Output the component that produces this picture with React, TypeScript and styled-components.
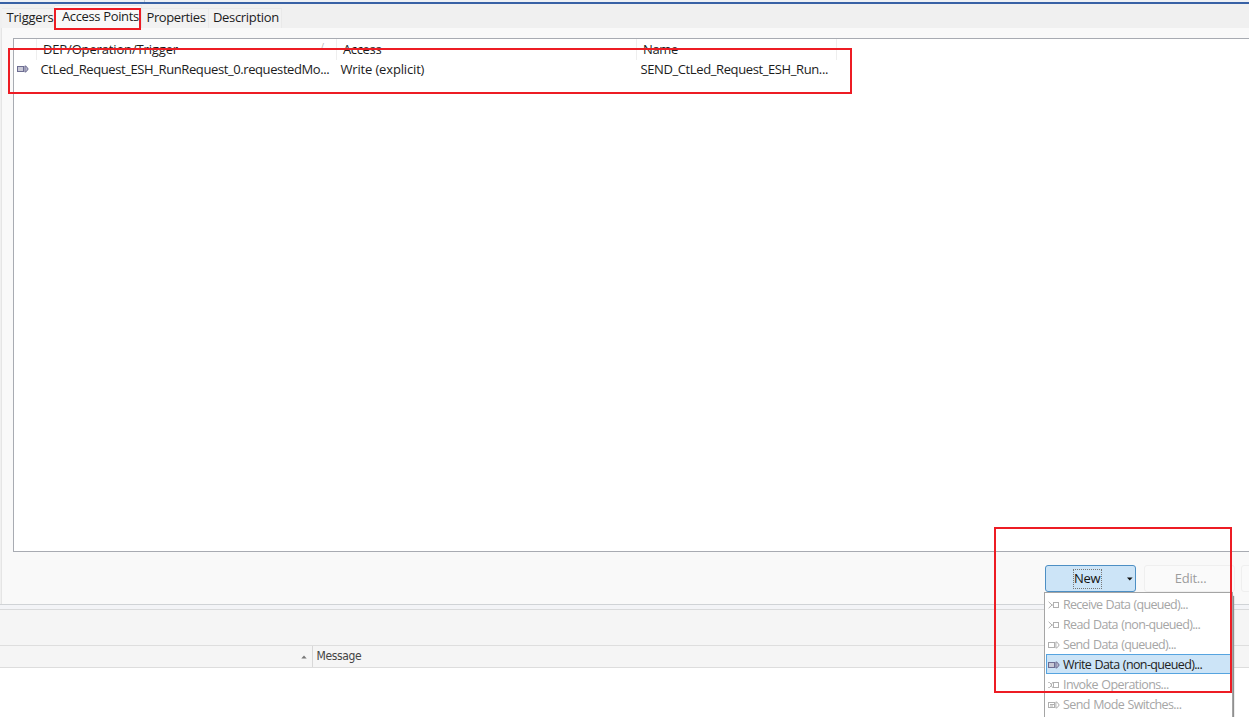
import React from "react";
import styled, { createGlobalStyle } from "styled-components";

const Global = createGlobalStyle`
  * { box-sizing: border-box; }
  html, body { margin: 0; padding: 0; overflow: hidden; background: #fff; }
`;

const Page = styled.div`
  position: relative;
  width: 1249px;
  height: 717px;
  overflow: hidden;
  display: flex;
  flex-direction: column;
  font: 13px/20px "Open Sans", "Noto Sans", sans-serif;
  color: #1c1c1c;
  background: #fff;
`;

const TopEdge = styled.div`
  flex: none;
  height: 4px;
  background: #eef1f6;
  border-bottom: 2px solid #3861a5;
  &::after {
    content: "";
    display: block;
    width: 1px;
    height: 2px;
    margin-left: 144px;
    background: #c5cad3;
  }
`;

const Label = styled.span<{ $track?: number }>`
  white-space: nowrap;
  letter-spacing: ${(p) => p.$track ?? 0}px;
`;

const TabBar = styled.div`
  flex: none;
  height: 24px;
  padding: 3px 0 0 2px;
  display: flex;
  align-items: flex-end;
  background: #f0f0f0;
`;

const Tab = styled.div<{ $w: number; $pad: number; $active?: boolean }>`
  flex: none;
  width: ${(p) => p.$w}px;
  height: ${(p) => (p.$active ? 23 : 20)}px;
  padding-left: ${(p) => p.$pad}px;
  line-height: ${(p) => (p.$active ? 20 : 17)}px;
  border: 1px solid #e9e9e9;
  border-width: 1px 1px 0 0;
  background: ${(p) => (p.$active ? "#f9f9f9" : "#f2f2f2")};
`;

const Panel = styled.section`
  flex: none;
  height: 576px;
  margin-left: 1px;
  padding: 10px 0 0 11px;
  border-left: 1px solid #e5e5e5;
  background: #f9f9f9;
  box-shadow: -1px 0 0 #f0f0f0;
`;

const List = styled.div`
  height: 514px;
  background: #fff;
  border: 1px solid #a8abb2;
  border-right: 0;
`;

const HeadRow = styled.div`
  display: grid;
  grid-template-columns: 23px 300px 300px 200px;
  height: 21px;
`;

const HeadCell = styled.div`
  display: flex;
  justify-content: space-between;
  padding-left: 6px;
  padding-right: 12px;
  border-right: 1px solid #eeeeee;
`;

const DataRow = styled.div`
  display: grid;
  grid-template-columns: 26.5px 300px 300px 200px;
  height: 20px;
  line-height: 19px;
`;

const IconCell = styled.div`
  display: flex;
  align-items: center;
  padding: 0 0 2px 3px;
`;

const SortMark = styled.span`
  color: #b5b5b5;
  font-size: 9px;
  line-height: 16px;
`;

const Actions = styled.div`
  display: flex;
  height: 52px;
  padding: 13px 0 0 1032px;
  gap: 8px;
`;

const SplitButton = styled.button`
  flex: none;
  display: flex;
  align-items: center;
  justify-content: space-between;
  width: 91px;
  height: 27px;
  padding: 0 2px 0 27px;
  font: inherit;
  color: #111;
  background: #cce4f7;
  border: 1px solid #4d8fc4;
  border-radius: 3px;
`;

const FocusText = styled.span`
  height: 20px;
  width: 29px;
  line-height: 17px;
  text-align: left;
  border: 1px dotted #777;
`;

const PlainButton = styled.button`
  flex: none;
  width: 91px;
  height: 27px;
  padding: 0 0 2px 2px;
  font: inherit;
  color: #9d9d9d;
  background: #fafafa;
  border: 1px solid #efefef;
  border-radius: 3px;
`;

const EdgeButton = styled(PlainButton)`
  margin-left: -2px;
`;

const Sash = styled.div`
  flex: none;
  height: 6px;
  border-top: 1px solid #d0d3d6;
  border-bottom: 1px solid #d9dadb;
  background: #f3f4f7;
`;

const Toolbar = styled.div`
  flex: none;
  height: 36px;
  background: #f5f5f5;
  border-bottom: 1px solid #dedede;
`;

const ProblemsHead = styled.div`
  flex: none;
  display: flex;
  height: 22px;
  background: #f5f5f5;
  border-bottom: 1px solid #dddddd;
  font-family: "DejaVu Sans Condensed", "DejaVu Sans", sans-serif;
  font-size: 12px;
  line-height: 20px;
  color: #444;
`;

const SortCell = styled.div`
  width: 313px;
  display: flex;
  align-items: center;
  justify-content: flex-end;
  padding-right: 5px;
  border-right: 1px solid #d8d8d8;
`;

const MessageCell = styled.div`
  padding-left: 3.5px;
`;

const Menu = styled.div`
  position: absolute;
  left: 1044px;
  top: 592px;
  width: 189px;
  height: 130px;
  padding: 1px 1px;
  background: #fff;
  border: 1px solid #a5a5a5;
  box-shadow: 1px 4px 1px #8f8f8f;
`;

const MenuItem = styled.div<{ $selected?: boolean }>`
  display: flex;
  align-items: center;
  gap: 3.5px;
  height: 20px;
  padding-top: ${(p) => (p.$selected ? 1 : 2)}px;
  padding-left: ${(p) => (p.$selected ? 0.5 : 1.5)}px;
  font-size: 12.5px;
  line-height: 18px;
  word-spacing: 0.8px;
  color: ${(p) => (p.$selected ? "#222" : "#a6a6a6")};
  background: ${(p) => (p.$selected ? "#cce4f7" : "transparent")};
  border: ${(p) => (p.$selected ? "1px solid #56a4e0" : "0")};
`;

const Marker = styled.div<{ $x: number; $y: number; $w: number; $h: number }>`
  position: absolute;
  left: ${(p) => p.$x}px;
  top: ${(p) => p.$y}px;
  width: ${(p) => p.$w}px;
  height: ${(p) => p.$h}px;
  border: 2px solid #ed1c24;
  pointer-events: none;
`;

const Glyph = styled.svg`
  flex: none;
`;

type IconKind = "receive" | "send" | "write" | "invoke" | "mode";

const PortIcon = ({ kind }: { kind: IconKind }) => {
  const write = kind === "write";
  const incoming = kind === "receive" || kind === "invoke";
  return (
    <Glyph width="12" height="10" viewBox="0 0 12 10" fill="none" stroke={write ? "#6d6d92" : "#b0b0b0"}>
      {incoming ? (
        <>
          <path d={kind === "receive" ? "M.6 1.8 4 5 .6 8.2M4 5H5.5" : "M.3 2.5H1.5L4 5 1.5 7.5H.3M5.5 2.5H4.5L3 5 4.5 7.5H5.5"} />
          <rect x="5.5" y="2.5" width="5" height="5" />
        </>
      ) : (
        <>
          <rect x=".5" y="2.5" width="6" height="5" fill={write ? "#c9c9d6" : "none"} />
          {kind === "mode" && <path d="M2 4.5H6M2 6H5" />}
          <path d="M7.9 1.9V8.1L9.2 7.7 11.2 5 9.2 2.3Z" fill={write ? "#b4b4ca" : "none"} />
        </>
      )}
    </Glyph>
  );
};

const menuItems: { text: string; kind: IconKind; track: number }[] = [
  { text: "Receive Data (queued)...", kind: "receive", track: -0.7 },
  { text: "Read Data (non-queued)...", kind: "receive", track: -0.66 },
  { text: "Send Data (queued)...", kind: "send", track: -0.65 },
  { text: "Write Data (non-queued)...", kind: "write", track: -0.63 },
  { text: "Invoke Operations...", kind: "invoke", track: -0.6 },
  { text: "Send Mode Switches...", kind: "mode", track: -0.62 },
];

export default function App() {
  return (
    <Page>
      <Global />
      <TopEdge />
      <TabBar>
        <Tab $w={53} $pad={4.5}><Label $track={-0.2}>Triggers</Label></Tab>
        <Tab $w={87} $pad={7} $active><Label $track={-0.36}>Access Points</Label></Tab>
        <Tab $w={67} $pad={4.5}><Label $track={-0.4}>Properties</Label></Tab>
        <Tab $w={73} $pad={4}><Label $track={-0.32}>Description</Label></Tab>
      </TabBar>
      <Panel>
        <List>
          <HeadRow>
            <HeadCell />
            <HeadCell><Label $track={-0.15}>DEP/Operation/Trigger</Label><SortMark>/</SortMark></HeadCell>
            <HeadCell><Label $track={-0.35}>Access</Label></HeadCell>
            <HeadCell><Label $track={-0.35}>Name</Label></HeadCell>
          </HeadRow>
          <DataRow>
            <IconCell><PortIcon kind="write" /></IconCell>
            <Label $track={-0.4}>CtLed_Request_ESH_RunRequest_0.requestedMo...</Label>
            <Label $track={-0.16}>Write (explicit)</Label>
            <Label $track={-0.39}>SEND_CtLed_Request_ESH_Run...</Label>
          </DataRow>
        </List>
        <Actions>
          <SplitButton>
            <FocusText><Label $track={-0.3}>New</Label></FocusText>
            <svg width="6" height="4" viewBox="0 0 6 4"><path d="M0 .5H5.6L2.8 3.5Z" fill="#111" /></svg>
          </SplitButton>
          <PlainButton><Label $track={-0.25}>Edit...</Label></PlainButton>
          <EdgeButton aria-label="Delete" />
        </Actions>
      </Panel>
      <Sash />
      <Toolbar />
      <ProblemsHead>
        <SortCell>
          <svg width="6" height="4" viewBox="0 0 6 4"><path d="M.3 3.5H5.7L3 .5Z" fill="#777" /></svg>
        </SortCell>
        <MessageCell><Label $track={-0.35}>Message</Label></MessageCell>
      </ProblemsHead>
      <Menu>
        {menuItems.map((m) => (
          <MenuItem key={m.text} $selected={m.kind === "write"}>
            <PortIcon kind={m.kind} />
            <Label $track={m.track}>{m.text}</Label>
          </MenuItem>
        ))}
      </Menu>
      <Marker $x={54} $y={8} $w={87} $h={22} />
      <Marker $x={8} $y={48} $w={844} $h={46} />
      <Marker $x={994} $y={527} $w={238} $h={166} />
    </Page>
  );
}
